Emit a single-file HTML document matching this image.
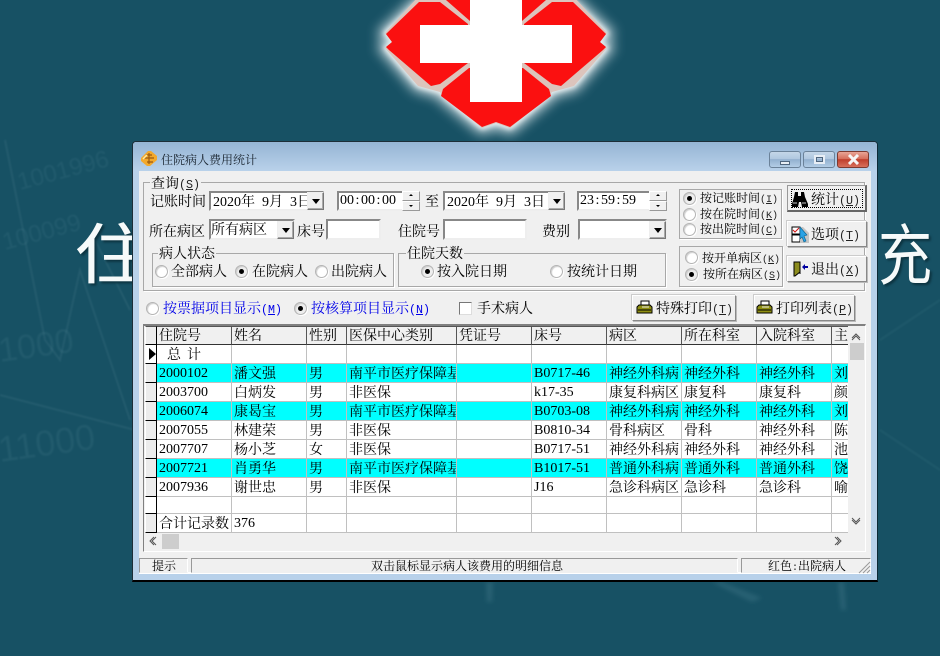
<!DOCTYPE html>
<html lang="zh"><head><meta charset="utf-8"><title>住院病人费用统计</title>
<style>
html,body{margin:0;padding:0}
body{width:940px;height:656px;overflow:hidden;position:relative;background:#175164;font-family:"Noto Serif CJK SC","Liberation Serif",serif;font-size:14px;color:#000}
svg{position:absolute;display:block}
.a{position:absolute;box-sizing:border-box}
.t{position:absolute;white-space:nowrap;line-height:14px;font-size:14px;height:14px}
.s{font-size:12px;line-height:12px;height:12px}
.m{font-family:"Liberation Serif",serif;font-size:14px}
.g{margin-left:7px}
.q{display:inline-block;width:7px;text-align:center}
.p{font-family:"Liberation Mono",monospace;font-size:11.67px;color:#222}
.s .p{font-size:10px}
.b{color:#0000e8}
.b .p{color:#0000e8}
.sun{position:absolute;box-sizing:border-box;background:#fff;border:2px solid;border-color:#888 #eee #eee #888;overflow:hidden}
.cb{position:absolute;box-sizing:border-box;background:#f0f0f0;border:1px solid;border-color:#eee #777 #777 #eee;box-shadow:inset -1px -1px 0 #aaa}
.cb:after{content:"";position:absolute;left:4px;top:6px;border:4px solid transparent;border-top:5px solid #000;border-bottom:0}
.up,.dn{position:absolute;box-sizing:border-box;background:#f0f0f0;border:1px solid;border-color:#fff #999 #999 #fff;width:18px;height:9px}
.up:after{content:"";position:absolute;left:6px;top:2px;border:2px solid transparent;border-bottom:2px solid #000;border-top:0}
.dn:after{content:"";position:absolute;left:6px;top:3px;border:2px solid transparent;border-top:2px solid #000;border-bottom:0}
.gb{position:absolute;box-sizing:border-box;border:1px solid #a8a8a8;box-shadow:1px 1px 0 #fff}
.lb{background:#f0f0f0;padding:0 1px}
.r{position:absolute;width:13px;height:13px;box-sizing:border-box;border-radius:50%;background:#fff;border:1px solid #b4b4b4;box-shadow:inset 1px 1px 1px #ccc,1px 1px 0 #fff}
.r.on{background:#eee}
.r.on:after{content:"";position:absolute;left:3px;top:3px;width:5px;height:5px;border-radius:50%;background:#000}
.btn{position:absolute;box-sizing:border-box;background:#f0f0f0;border:1px solid;border-color:#fff #888 #888 #fff;box-shadow:1px 1px 0 #bbb,-1px -1px 0 #ccc}
.wb{position:absolute;top:151px;width:32px;height:17px;box-sizing:border-box;border:1px solid #6b8299;border-radius:3px;background:linear-gradient(#c4d6e8 0,#b0c8e0 45%,#92b0cf 50%,#b3cde6 100%)}
table{border-collapse:separate;border-spacing:0;table-layout:fixed;position:absolute;left:145px;top:326px;width:703px}
td{box-sizing:border-box;padding:1px 0 0 2px;height:19px;line-height:17px;white-space:nowrap;overflow:hidden;border-right:1px solid #c0c0c0;border-bottom:1px solid #c0c0c0;font-size:14px;background:#fff;vertical-align:middle}
tr.h td{height:19px;background:#f0f0f0;border-right:1px solid #555;border-bottom:1px solid #333;border-top:1px solid #555;padding-top:0}
tr.c td{background:#00ffff}
tr.c td.i,tr td.i{background:#ececec;border-right:1px solid #000;border-bottom:1px solid #000;border-left:1px solid #fff;padding:0}
tr.n td.i{background:#fff}
tr.z td{height:17px;line-height:14px;padding-top:0}
tr.y td{height:19px}
.x{border-right:0!important}
</style></head><body>

<svg width="940" height="656" style="left:0;top:0" viewBox="0 0 940 656">
<defs><filter id="bl" x="-30%" y="-30%" width="160%" height="160%"><feGaussianBlur stdDeviation="6"/></filter>
<filter id="bk" x="-30%" y="-30%" width="160%" height="160%"><feGaussianBlur stdDeviation="2.5"/></filter>
<filter id="bs"><feGaussianBlur stdDeviation="2"/></filter>
<filter id="bt"><feGaussianBlur stdDeviation="0.7"/></filter></defs>
<g fill="none" stroke="#4f8493" stroke-opacity=".2" stroke-width="2" filter="url(#bt)">
<path d="M5 140 L45 340 L60 360 L80 270 L130 420"/><path d="M95 240L130 310"/><path d="M0 395L135 430"/>
</g>
<g fill="#5d919f" fill-opacity=".13" font-family="Liberation Sans,sans-serif" filter="url(#bt)">
<text x="0" y="362" font-size="34" transform="rotate(-8 0 362)">1000</text>
<text x="0" y="462" font-size="36" transform="rotate(-8 0 462)">11000</text>
<text x="20" y="190" font-size="24" transform="rotate(-15 20 190)">1001996</text>
<text x="5" y="250" font-size="24" transform="rotate(-15 5 250)">100099</text>
</g>
<g fill="none" stroke="#5d919f" stroke-opacity=".1" stroke-width="2" filter="url(#bt)"><path d="M880 340L940 300M880 430L940 470"/></g>
<g fill="#4d8696" fill-opacity=".3" filter="url(#bs)"><path d="M486 582h7l-1 20h-5zM712 582l10 0 40 16-10 4zM838 582h6l2 28h-5z"/></g>
<g>
<path d="M385 33L418 2H574L607 33L600 42L607 48L574 86L552 92L548 97L510 128L496 123L482 128L444 97L440 92L418 86L385 48L392 42Z" fill="#fff" stroke="#dfeaee" stroke-width="12" filter="url(#bl)" opacity=".85"/>
<path d="M385 33L418 2H574L607 33L600 42L607 48L574 86L552 92L548 97L510 128L496 123L482 128L444 97L440 92L418 86L385 48L392 42Z" fill="#e6eef0" stroke="#e6eef0" stroke-width="3" filter="url(#bk)"/>
<path d="M385 33L418 -3H574L607 33L600 42L607 48L574 86L552 92L548 97L510 128L496 123L482 128L444 97L440 92L418 86L385 48L392 42Z" fill="#dcc4bc"/>
<path fill="#fb1010" d="M386 34L419 2H440L468 24V63L440 84L431 86L389 50L386 47L392 42ZM606 34L573 2H552L524 24V63L552 84L561 86L603 50L606 47L600 42ZM443 89L469 68H523L549 89L551 96L510 127L496 122L482 127L441 96ZM446 0H470V21ZM546 0H522V21Z"/>
<path fill="#fff" d="M470 -5H522V25H572V63H522V102H470V63H420V25H470Z"/></g>
<g font-family="Noto Sans CJK SC,sans-serif" font-size="66" fill="#f6fafa" font-weight="400" style="filter:drop-shadow(2px 2px 1px #0c3340)">
<text transform="translate(74 278) scale(1.22 1)">住</text><text transform="translate(878 279) scale(.82 1)">充</text></g>
</svg>

<!-- window -->
<div class="a" style="left:132px;top:141px;width:746px;height:441px;background:#b8d1ea;border:1px solid #1c2e38;border-bottom:2px solid #000;border-right:1px solid #0d2a36;border-radius:4px 4px 0 0;box-shadow:inset 0 1px 0 #eef4fa"></div>
<div class="a" style="left:133px;top:142px;width:744px;height:29px;border-radius:3px 3px 0 0;background:linear-gradient(#95b5d4,#b9d1ea)"></div>
<div class="a" style="left:139px;top:171px;width:732px;height:403px;background:#f0f0f0"></div>
<div class="a" style="left:139px;top:572px;width:732px;height:2px;background:#fff"></div>

<svg style="left:140px;top:150px" width="18" height="18" viewBox="0 0 18 18"><path d="M1 8L8 1h3l6 5v4l-7 6H7L1 11z" fill="#f3a92c"/><path d="M4 8h10M6 5h6M7 12h6M9 3v11" stroke="#9a5a10" stroke-width="1.2" fill="none"/><path d="M3 9l4-4" stroke="#ffe9a0" stroke-width="1.5"/></svg>
<div class="t s" style="left:161px;top:154px;color:#1a2530">住院病人费用统计</div>

<div class="wb" style="left:769px"><div class="a" style="left:10px;top:9px;width:10px;height:4px;background:#e8eef5;border:1px solid #50667e"></div></div>
<div class="wb" style="left:803px"><div class="a" style="left:10px;top:3px;width:11px;height:9px;background:transparent;border:2px solid #e8eef5;outline:1px solid #50667e;outline-offset:-3px"></div></div>
<div class="wb" style="left:837px;border-color:#7d3a30;background:linear-gradient(#e8a597 0,#d66f5c 45%,#bf3e2c 50%,#d8705c 100%)"><svg style="left:9px;top:2px" width="13" height="11" viewBox="0 0 13 11"><path d="M2 1l9 9M11 1l-9 9" stroke="#f6f6f6" stroke-width="3"/></svg></div>

<!-- query group -->
<div class="gb" style="left:143px;top:182px;width:722px;height:109px"></div>
<div class="t lb" style="left:150px;top:176px">查询<span class="p">(<u>S</u>)</span></div>

<div class="t" style="left:150px;top:194px">记账时间</div>
<div class="sun" style="left:209px;top:191px;width:115px;height:20px"></div>
<div class="t" style="left:213px;top:194px;width:94px;overflow:hidden"><span class="m">2020</span>年<span class="m g">9</span>月<span class="m g">3</span>日</div>
<div class="cb" style="left:307px;top:192px;width:17px;height:18px"></div>

<div class="sun" style="left:337px;top:191px;width:83px;height:20px"></div>
<div class="t m" style="left:340px;top:194px">00<span class="q">:</span>00<span class="q">:</span>00</div>
<div class="up" style="left:402px;top:191px;height:10px"></div><div class="dn" style="left:402px;top:201px;height:10px"></div>
<div class="t" style="left:425px;top:194px">至</div>

<div class="sun" style="left:443px;top:191px;width:122px;height:20px"></div>
<div class="t" style="left:447px;top:194px"><span class="m">2020</span>年<span class="m g">9</span>月<span class="m g">3</span>日</div>
<div class="cb" style="left:548px;top:192px;width:17px;height:18px"></div>

<div class="sun" style="left:577px;top:191px;width:90px;height:20px"></div>
<div class="t m" style="left:580px;top:194px">23<span class="q">:</span>59<span class="q">:</span>59</div>
<div class="up" style="left:649px;top:191px;height:10px"></div><div class="dn" style="left:649px;top:201px;height:10px"></div>

<div class="t" style="left:149px;top:224px">所在病区</div>
<div class="sun" style="left:209px;top:219px;width:86px;height:21px"></div>
<div class="t" style="left:211px;top:222px">所有病区</div>
<div class="cb" style="left:277px;top:221px;width:17px;height:18px"></div>
<div class="t" style="left:297px;top:224px">床号</div>
<div class="sun" style="left:326px;top:219px;width:55px;height:21px"></div>
<div class="t" style="left:398px;top:224px">住院号</div>
<div class="sun" style="left:443px;top:219px;width:84px;height:21px"></div>
<div class="t" style="left:542px;top:224px">费别</div>
<div class="sun" style="left:578px;top:219px;width:89px;height:21px"></div>
<div class="cb" style="left:649px;top:221px;width:17px;height:18px"></div>

<div class="gb" style="left:152px;top:253px;width:242px;height:34px"></div>
<div class="t lb" style="left:158px;top:246px">病人状态</div>
<div class="r" style="left:155px;top:265px"></div><div class="t" style="left:171px;top:264px">全部病人</div>
<div class="r on" style="left:235px;top:265px"></div><div class="t" style="left:252px;top:264px">在院病人</div>
<div class="r" style="left:315px;top:265px"></div><div class="t" style="left:331px;top:264px">出院病人</div>

<div class="gb" style="left:398px;top:253px;width:268px;height:34px"></div>
<div class="t lb" style="left:406px;top:246px">住院天数</div>
<div class="r on" style="left:421px;top:265px"></div><div class="t" style="left:437px;top:264px">按入院日期</div>
<div class="r" style="left:550px;top:265px"></div><div class="t" style="left:567px;top:264px">按统计日期</div>

<div class="gb" style="left:679px;top:189px;width:103px;height:50px"></div>
<div class="r on" style="left:683px;top:192px"></div><div class="t s" style="left:700px;top:192px">按记账时间<span class="p">(<u>I</u>)</span></div>
<div class="r" style="left:683px;top:208px"></div><div class="t s" style="left:700px;top:208px">按在院时间<span class="p">(<u>K</u>)</span></div>
<div class="r" style="left:683px;top:223px"></div><div class="t s" style="left:700px;top:223px">按出院时间<span class="p">(<u>C</u>)</span></div>

<div class="gb" style="left:679px;top:246px;width:104px;height:41px"></div>
<div class="r" style="left:685px;top:251px"></div><div class="t s" style="left:702px;top:252px">按开单病区<span class="p">(<u>K</u>)</span></div>
<div class="r on" style="left:685px;top:268px"></div><div class="t s" style="left:703px;top:268px">按所在病区<span class="p">(<u>S</u>)</span></div>

<!-- right buttons -->
<div class="btn" style="left:787px;top:185px;width:80px;height:27px;border:1px solid #999;border-right:2px solid #666;border-bottom:2px solid #666;box-shadow:none"><div class="a" style="left:3px;top:3px;width:72px;height:19px;border:1px dotted #000"></div></div>
<svg style="left:791px;top:192px" width="17" height="15" viewBox="0 0 17 15"><path d="M4 0h3v4h3V0h3l1 5 3 7v3h-6l-1-5H8l-1 5H1v-3l2-7z" fill="#000"/><path d="M2 11h4M11 11h4" stroke="#c8c8c8"/></svg>
<div class="t" style="left:811px;top:192px">统计<span class="p">(<u>U</u>)</span></div>
<div class="btn" style="left:787px;top:221px;width:80px;height:26px"></div>
<svg style="left:791px;top:226px" width="18" height="18" viewBox="0 0 18 18"><rect x="1" y="1" width="8" height="7" fill="#fff" stroke="#000"/><rect x="1" y="9" width="8" height="7" fill="#fff" stroke="#000"/><path d="M2 4l2 2 4-4" stroke="#d01010" fill="none"/><path d="M9 1h3l6 6v10H9z" fill="#c4c4c4"/><path d="M9 1l7 8-3 1 2 5-2 1-2-5-2 2z" fill="#2aa3e6" stroke="#05608e" stroke-width=".6"/></svg>
<div class="t" style="left:811px;top:227px">选项<span class="p">(<u>T</u>)</span></div>
<div class="btn" style="left:787px;top:256px;width:80px;height:26px"></div>
<svg style="left:793px;top:261px" width="16" height="16" viewBox="0 0 16 16"><path d="M1 1h6v10l-5 4H1z" fill="#8c8c1e" stroke="#000"/><path d="M7 1v12" stroke="#000"/><path d="M9 6l3-3v2h3v2h-3v2z" fill="#0000a0"/></svg>
<div class="t" style="left:811px;top:262px">退出<span class="p">(<u>X</u>)</span></div>

<!-- option row -->
<div class="r" style="left:146px;top:302px"></div><div class="t b" style="left:163px;top:301px">按票据项目显示<span class="p">(<u>M</u>)</span></div>
<div class="r on" style="left:294px;top:302px"></div><div class="t b" style="left:311px;top:301px">按核算项目显示<span class="p">(<u>N</u>)</span></div>
<div class="a" style="left:459px;top:302px;width:13px;height:13px;background:#fff;border:1px solid;border-color:#777 #ddd #ddd #777"></div>
<div class="t" style="left:477px;top:301px">手术病人</div>

<div class="btn" style="left:632px;top:295px;width:104px;height:26px"></div>
<svg style="left:636px;top:300px" width="17" height="14" viewBox="0 0 17 14"><path d="M5 1h8v5H5z" fill="#fff" stroke="#000"/><path d="M1 7l2-2h11l2 2v6H1z" fill="#8f8f12" stroke="#000"/><path d="M2 10h13" stroke="#000"/><path d="M6 7h7" stroke="#e8e8e8"/></svg>
<div class="t" style="left:656px;top:301px">特殊打印<span class="p">(<u>T</u>)</span></div>
<div class="btn" style="left:754px;top:295px;width:101px;height:26px"></div>
<svg style="left:756px;top:300px" width="17" height="14" viewBox="0 0 17 14"><path d="M5 1h8v5H5z" fill="#fff" stroke="#000"/><path d="M1 7l2-2h11l2 2v6H1z" fill="#8f8f12" stroke="#000"/><path d="M2 10h13" stroke="#000"/><path d="M6 7h7" stroke="#e8e8e8"/></svg>
<div class="t" style="left:776px;top:301px">打印列表<span class="p">(<u>P</u>)</span></div>

<!-- grid -->
<div class="a" style="left:143px;top:324px;width:723px;height:228px;background:#f0f0f0;border:1px solid;border-color:#808080 #fff #fff #808080;border-top-width:2px"></div>
<table><colgroup><col style="width:12px"><col style="width:75px"><col style="width:75px"><col style="width:40px"><col style="width:110px"><col style="width:75px"><col style="width:75px"><col style="width:75px"><col style="width:75px"><col style="width:75px"><col style="width:16px"></colgroup>
<tr class="h"><td class="i"></td><td>住院号</td><td>姓名</td><td>性别</td><td>医保中心类别</td><td>凭证号</td><td>床号</td><td>病区</td><td>所在科室</td><td>入院科室</td><td class="x">主</td></tr>
<tr class="n"><td class="i" style="position:relative"><svg style="left:3px;top:3px" width="7" height="12"><path d="M0 0l7 6-7 6z" fill="#000"/></svg></td><td><span style="padding-left:8px">总</span><span style="padding-left:6px">计</span></td><td></td><td></td><td></td><td></td><td></td><td></td><td></td><td></td><td class="x"></td></tr>
<tr class="c"><td class="i"></td><td class="m">2000102</td><td>潘文强</td><td>男</td><td>南平市医疗保障基</td><td></td><td class="m">B0717-46</td><td>神经外科病</td><td>神经外科</td><td>神经外科</td><td class="x">刘</td></tr>
<tr><td class="i"></td><td class="m">2003700</td><td>白炳发</td><td>男</td><td>非医保</td><td></td><td class="m">k17-35</td><td>康复科病区</td><td>康复科</td><td>康复科</td><td class="x">颜</td></tr>
<tr class="c"><td class="i"></td><td class="m">2006074</td><td>康曷宝</td><td>男</td><td>南平市医疗保障基</td><td></td><td class="m">B0703-08</td><td>神经外科病</td><td>神经外科</td><td>神经外科</td><td class="x">刘</td></tr>
<tr><td class="i"></td><td class="m">2007055</td><td>林建荣</td><td>男</td><td>非医保</td><td></td><td class="m">B0810-34</td><td>骨科病区</td><td>骨科</td><td>神经外科</td><td class="x">陈</td></tr>
<tr><td class="i"></td><td class="m">2007707</td><td>杨小芝</td><td>女</td><td>非医保</td><td></td><td class="m">B0717-51</td><td>神经外科病</td><td>神经外科</td><td>神经外科</td><td class="x">池</td></tr>
<tr class="c"><td class="i"></td><td class="m">2007721</td><td>肖勇华</td><td>男</td><td>南平市医疗保障基</td><td></td><td class="m">B1017-51</td><td>普通外科病</td><td>普通外科</td><td>普通外科</td><td class="x">饶</td></tr>
<tr><td class="i"></td><td class="m">2007936</td><td>谢世忠</td><td>男</td><td>非医保</td><td></td><td class="m">J16</td><td>急诊科病区</td><td>急诊科</td><td>急诊科</td><td class="x">喻</td></tr>
<tr class="z n"><td class="i"></td><td></td><td></td><td></td><td></td><td></td><td></td><td></td><td></td><td></td><td class="x"></td></tr>
<tr class="y"><td class="i"></td><td>合计记录数</td><td class="m">376</td><td></td><td></td><td></td><td></td><td></td><td></td><td></td><td class="x"></td></tr>
</table>

<!-- scrollbars -->
<svg style="left:848px;top:326px" width="17" height="224" viewBox="0 0 17 224"><rect width="17" height="224" fill="#f0f0f0"/><path d="M4 12l4-4 4 4M4 14l4-4 4 4" stroke="#555" fill="none" stroke-width="1"/><rect x="2" y="17" width="14" height="17" fill="#cdcdcd"/><path d="M4 192l4 4 4-4M4 194l4 4 4-4" stroke="#555" fill="none"/></svg>
<svg style="left:145px;top:533px" width="720" height="17" viewBox="0 0 720 17"><rect width="720" height="17" fill="#f0f0f0"/><path d="M9 4L5 8l4 4M11 4L7 8l4 4" stroke="#555" fill="none"/><rect x="17" y="1" width="17" height="15" fill="#cdcdcd"/><path d="M690 4l4 4-4 4M692 4l4 4-4 4" stroke="#555" fill="none"/></svg>

<!-- status bar -->
<div class="a" style="left:139px;top:558px;width:49px;height:15px;border:1px solid;border-color:#999 #fff #f0f0f0 #999"></div>
<div class="t s" style="left:152px;top:560px">提示</div>
<div class="a" style="left:191px;top:558px;width:547px;height:15px;border:1px solid;border-color:#999 #fff #f0f0f0 #999"></div>
<div class="t s" style="left:371px;top:560px">双击鼠标显示病人该费用的明细信息</div>
<div class="a" style="left:741px;top:558px;width:130px;height:15px;border:1px solid;border-color:#999 #fff #f0f0f0 #999"></div>
<div class="t s" style="left:768px;top:560px">红色<span class="p">:</span>出院病人</div>
<svg style="left:858px;top:561px" width="13" height="13" viewBox="0 0 13 13"><path d="M12 1L1 12M12 5L5 12M12 9L9 12" stroke="#999"/></svg>
</body></html>
